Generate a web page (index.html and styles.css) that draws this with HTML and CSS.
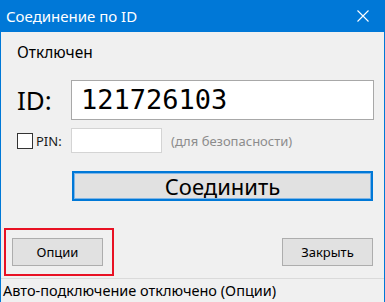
FILE: index.html
```html
<!DOCTYPE html>
<html lang="ru">
<head>
  <meta charset="UTF-8" />
  <title>Соединение по ID</title>
  <link rel="stylesheet" href="styles.css">
</head>
<body>
  <div class="window">
    <div class="titlebar">
      <span class="title">Соединение по ID</span>
      <svg class="close-x" width="12" height="12" viewBox="0 0 12 12">
        <path d="M0.5 0.5 L11.5 11.5 M11.5 0.5 L0.5 11.5" stroke="#fff" stroke-width="1.1" fill="none"/>
      </svg>
    </div>

    <div class="main">
      <div class="state">Отключен</div>

      <div class="id-row">
        <label class="id-label">ID:</label>
        <div class="id-input">121726103</div>
      </div>

      <div class="pin-row">
        <span class="checkbox"></span>
        <span class="pin-label">PIN:</span>
        <div class="pin-input"></div>
        <span class="hint">(для безопасности)</span>
      </div>

      <button class="connect">Соединить</button>

      <div class="bottom">
        <div class="highlight">
          <button class="btn">Опции</button>
        </div>
        <button class="btn">Закрыть</button>
      </div>
    </div>

    <div class="statusbar">Авто-подключение отключено (Опции)</div>
  </div>
</body>
</html>
```

FILE: styles.css
```css
* {
  box-sizing: border-box;
}
body {
  margin: 0;
  background: #f0f0f0;
  font-family: "Noto Sans", "Open Sans", sans-serif;
  color: #000;
}
.window {
  width: 385px;
  height: 302px;
  border-left: 1px solid #0078d7;
  border-right: 1px solid #0078d7;
  display: flex;
  flex-direction: column;
  overflow: hidden;
}
.titlebar {
  height: 32px;
  flex: none;
  background: #0078d7;
  color: #fff;
  display: flex;
  align-items: center;
  justify-content: space-between;
  padding: 0 15px 0 5px;
}
.title {
  font-size: 15px;
}
.main {
  padding: 0 10px 0 16px;
  display: flex;
  flex-direction: column;
}
.state {
  margin-top: 10px;
  font-size: 15.5px;
  line-height: 20px;
}
.id-row {
  margin-top: 18px;
  display: flex;
  align-items: center;
  height: 40px;
}
.id-label {
  width: 54px;
  font-size: 26px;
  line-height: 40px;
}
.id-input {
  flex: 1;
  height: 40px;
  background: #fff;
  border: 1px solid #a8a8a8;
  font-family: "DejaVu Sans Mono", monospace;
  font-size: 27px;
  line-height: 38px;
  padding-left: 9px;
}
.pin-row {
  margin-top: 8px;
  height: 25px;
  display: flex;
  align-items: center;
}
.checkbox {
  width: 16px;
  height: 16px;
  background: #fff;
  border: 1px solid #333;
}
.pin-label {
  width: 38px;
  padding-left: 3px;
  font-size: 13px;
  color: #1a1a1a;
}
.pin-input {
  width: 91px;
  height: 25px;
  background: #fff;
  border: 1px solid #d4d4d4;
}
.hint {
  margin-left: 9px;
  font-size: 13px;
  color: #8c8c8c;
}
.connect {
  margin: 18px 1px 0 55px;
  height: 30px;
  background: #e1e1e1;
  border: 2px solid #0078d7;
  box-shadow: inset 0 0 0 1px #7fb5e6;
  font-family: inherit;
  font-size: 22px;
  line-height: 24px;
  padding: 0;
  color: #000;
}
.bottom {
  margin-top: 27px;
  display: flex;
  justify-content: space-between;
  align-items: center;
}
.highlight {
  margin-left: -13px;
  border: 2px solid #e81123;
  padding: 8px 9px 8px 6px;
}
.btn {
  display: block;
  width: 91px;
  height: 28px;
  background: #e1e1e1;
  border: 1px solid #adadad;
  font-family: inherit;
  font-size: 13px;
  color: #000;
  padding: 0;
}
.bottom > .btn {
  margin-right: 1px;
}
.statusbar {
  margin-top: 2px;
  flex: 1;
  border-top: 1px solid #dadada;
  font-size: 14.5px;
  line-height: 20px;
  padding: 1px 0 0 2px;
}
```
